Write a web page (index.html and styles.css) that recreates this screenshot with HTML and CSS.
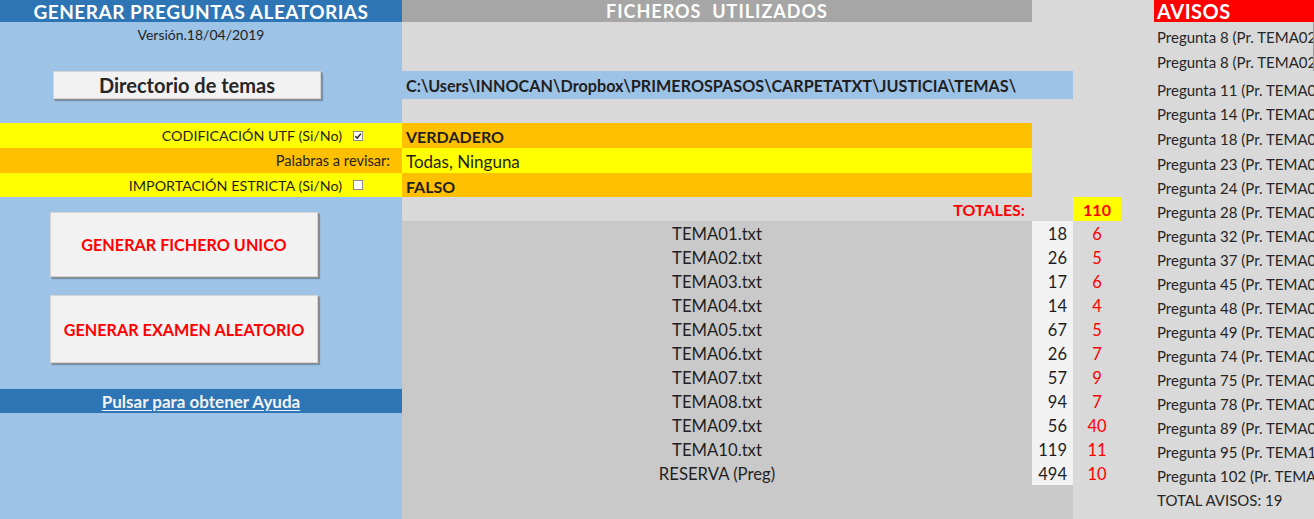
FILE: index.html
```html
<!DOCTYPE html>
<html lang="es">
<head>
<meta charset="utf-8">
<title>Generar preguntas aleatorias</title>
<link rel="stylesheet" href="styles.css">
</head>
<body>
<div class="sheet">
  <div class="title r1">GENERAR PREGUNTAS ALEATORIAS</div>
  <div class="midhead r1">FICHEROS&nbsp; UTILIZADOS</div>
  <div class="avhead r1">AVISOS</div>

  <div class="lefttop">
    <div class="version">Versión.18/04/2019</div>
    <div></div>
    <div class="btnrow"><div class="btn btn-dir">Directorio de temas</div></div>
    <div></div>
  </div>

  <div class="path">C:\Users\INNOCAN\Dropbox\PRIMEROSPASOS\CARPETATXT\JUSTICIA\TEMAS\</div>

  <div class="lbl yellow r6">CODIFICACIÓN UTF (Si/No)<span class="chk"><svg viewBox="0 0 10 10" width="10" height="10"><rect x="0.5" y="0.5" width="9" height="9" fill="#fff" stroke="#8c8c8c"/><path d="M2.3 5.2 L4.2 7.1 L7.8 2.8" fill="none" stroke="#222" stroke-width="1.4"/></svg></span></div>
  <div class="lbl orange plain r7">Palabras a revisar:</div>
  <div class="lbl yellow r8">IMPORTACIÓN ESTRICTA (Si/No)<span class="chk"><svg viewBox="0 0 10 10" width="10" height="10"><rect x="0.5" y="0.5" width="9" height="9" fill="#fff" stroke="#8c8c8c"/></svg></span></div>

  <div class="val orange bold r6">VERDADERO</div>
  <div class="val yellow r7">Todas, Ninguna</div>
  <div class="val orange bold r8">FALSO</div>

  <div class="totlbl r9">TOTALES:</div>
  <div class="totval r9">110</div>

  <div class="leftbottom">
    <div class="btn btn-red btn-1">GENERAR FICHERO UNICO</div>
    <div class="btn btn-red btn-2">GENERAR EXAMEN ALEATORIO</div>
    <div class="help"><span>Pulsar para obtener Ayuda</span></div>
  </div>

  <div class="fname r10">TEMA01.txt</div><div class="fnum r10">18</div><div class="fsel r10">6</div>
  <div class="fname r11">TEMA02.txt</div><div class="fnum r11">26</div><div class="fsel r11">5</div>
  <div class="fname r12">TEMA03.txt</div><div class="fnum r12">17</div><div class="fsel r12">6</div>
  <div class="fname r13">TEMA04.txt</div><div class="fnum r13">14</div><div class="fsel r13">4</div>
  <div class="fname r14">TEMA05.txt</div><div class="fnum r14">67</div><div class="fsel r14">5</div>
  <div class="fname r15">TEMA06.txt</div><div class="fnum r15">26</div><div class="fsel r15">7</div>
  <div class="fname r16">TEMA07.txt</div><div class="fnum r16">57</div><div class="fsel r16">9</div>
  <div class="fname r17">TEMA08.txt</div><div class="fnum r17">94</div><div class="fsel r17">7</div>
  <div class="fname r18">TEMA09.txt</div><div class="fnum r18">56</div><div class="fsel r18">40</div>
  <div class="fname r19">TEMA10.txt</div><div class="fnum r19">119</div><div class="fsel r19">11</div>
  <div class="fname r20">RESERVA (Preg)</div><div class="fnum r20">494</div><div class="fsel r20">10</div>
  <div class="midfill"></div>

  <div class="av edge r2">Pregunta 8 (Pr. TEMA02</div>
  <div class="av edge r3">Pregunta 8 (Pr. TEMA02</div>
  <div class="av r4">Pregunta 11 (Pr. TEMA0</div>
  <div class="av r5">Pregunta 14 (Pr. TEMA0</div>
  <div class="av r6">Pregunta 18 (Pr. TEMA0</div>
  <div class="av r7">Pregunta 23 (Pr. TEMA0</div>
  <div class="av r8">Pregunta 24 (Pr. TEMA0</div>
  <div class="av r9">Pregunta 28 (Pr. TEMA0</div>
  <div class="av r10">Pregunta 32 (Pr. TEMA0</div>
  <div class="av r11">Pregunta 37 (Pr. TEMA0</div>
  <div class="av r12">Pregunta 45 (Pr. TEMA0</div>
  <div class="av r13">Pregunta 48 (Pr. TEMA0</div>
  <div class="av r14">Pregunta 49 (Pr. TEMA0</div>
  <div class="av r15">Pregunta 74 (Pr. TEMA0</div>
  <div class="av r16">Pregunta 75 (Pr. TEMA0</div>
  <div class="av r17">Pregunta 78 (Pr. TEMA0</div>
  <div class="av r18">Pregunta 89 (Pr. TEMA0</div>
  <div class="av r19">Pregunta 95 (Pr. TEMA1</div>
  <div class="av r20">Pregunta 102 (Pr. TEMA</div>
  <div class="av r21">TOTAL AVISOS: 19</div>
</div>
</body>
</html>
```

FILE: styles.css
```css
html, body {
  margin: 0;
  padding: 0;
  background: #d9d9d9;
}

.sheet {
  display: grid;
  grid-template-columns: 402px 630px 41px 48px 33px 160px;
  grid-template-rows: 22px 24px 25px 28px 24px 25px 25px 24px 24px repeat(11, 24px) 24px 10px;
  width: 1314px;
  height: 519px;
  overflow: hidden;
  background: #d9d9d9;
  font-family: "Lato", "Liberation Sans", sans-serif;
  font-size: 16px;
  color: #1f1f1f;
}

.r1 { grid-row: 1; }
.r2 { grid-row: 2; }
.r3 { grid-row: 3; }
.r4 { grid-row: 4; }
.r5 { grid-row: 5; }
.r6 { grid-row: 6; }
.r7 { grid-row: 7; }
.r8 { grid-row: 8; }
.r9 { grid-row: 9; }
.r10 { grid-row: 10; }
.r11 { grid-row: 11; }
.r12 { grid-row: 12; }
.r13 { grid-row: 13; }
.r14 { grid-row: 14; }
.r15 { grid-row: 15; }
.r16 { grid-row: 16; }
.r17 { grid-row: 17; }
.r18 { grid-row: 18; }
.r19 { grid-row: 19; }
.r20 { grid-row: 20; }
.r21 { grid-row: 21; }

/* headers */
.title {
  grid-column: 1;
  background: #2e75b6;
  color: #fff;
  font-weight: 700;
  font-size: 19px;
  letter-spacing: 0.5px;
  display: flex;
  align-items: center;
  justify-content: center;
}
.midhead {
  grid-column: 2;
  background: #a6a6a6;
  color: #fff;
  font-weight: 700;
  font-size: 18px;
  letter-spacing: 1px;
  display: flex;
  align-items: center;
  justify-content: center;
}
.avhead {
  grid-column: 6;
  background: #ff0000;
  color: #fff;
  font-weight: 700;
  font-size: 20px;
  letter-spacing: 0.5px;
  padding-left: 3px;
  display: flex;
  align-items: center;
}

/* left top block */
.lefttop {
  grid-column: 1;
  grid-row: 2 / 6;
  background: #9dc3e6;
  display: grid;
  grid-template-rows: 24px 25px 28px 24px;
}
.version {
  font-size: 14px;
  color: #1f1f1f;
  text-align: center;
  padding-top: 4px;
}
.btnrow {
  display: flex;
  padding-left: 53px;
}

.btn {
  background: #f2f2f2;
  border: 1px solid #d4d4d4;
  box-shadow: 1px 1px 0 #8c8c8c, 2px 2px 1px rgba(0, 0, 0, 0.25);
  display: flex;
  align-items: center;
  justify-content: center;
  font-weight: 700;
  box-sizing: border-box;
}
.btn-dir {
  width: 268px;
  height: 28px;
  font-size: 20px;
  color: #262626;
}

/* path */
.path {
  grid-row: 4;
  grid-column: 2 / 4;
  background: #9dc3e6;
  font-weight: 700;
  font-size: 16.2px;
  padding-left: 4px;
  display: flex;
  align-items: center;
  white-space: nowrap;
}

/* label rows */
.yellow { background: #ffff00; }
.orange { background: #ffc000; }
.bold { font-weight: 700; }

.lbl {
  grid-column: 1;
  display: flex;
  align-items: center;
  justify-content: flex-end;
  font-size: 14.3px;
  padding-right: 39px;
  color: #1f1f1f;
}
.lbl.plain {
  padding-right: 12px;
  font-size: 14.6px;
}
.chk {
  display: inline-flex;
  margin-left: 11px;
}

.val {
  grid-column: 2;
  display: flex;
  align-items: center;
  padding: 2px 0 0 4px;
  font-size: 17px;
}
.val.bold {
  font-size: 16px;
}

.totlbl {
  grid-column: 2;
  display: flex;
  align-items: center;
  justify-content: flex-end;
  padding-right: 7px;
  color: #ff0000;
  font-weight: 700;
  font-size: 16px;
}
.totval {
  grid-column: 4;
  background: #ffff00;
  color: #ff0000;
  font-weight: 700;
  font-size: 16px;
  display: flex;
  align-items: center;
  justify-content: center;
}

/* left bottom block */
.leftbottom {
  grid-column: 1;
  grid-row: 9 / 23;
  background: #9dc3e6;
  display: flex;
  flex-direction: column;
  align-items: flex-start;
  padding-top: 15px;
}
.btn-red {
  color: #ff0000;
  width: 268px;
  margin-left: 50px;
  font-size: 16.2px;
}
.btn-1 { height: 65px; }
.btn-2 { height: 68px; margin-top: 18px; }
.help {
  margin-top: 26px;
  width: 100%;
  height: 24px;
  background: #2e75b6;
  display: flex;
  align-items: center;
  justify-content: center;
}
.help span {
  color: #f2f2f2;
  font-weight: 700;
  font-size: 17px;
  text-decoration: underline;
  text-underline-offset: 2px;
}

/* files table */
.fname,
.fnum,
.fsel {
  display: flex;
  align-items: center;
  padding-top: 2px;
  box-sizing: border-box;
}
.fname {
  grid-column: 2;
  background: #c9c9c9;
  justify-content: center;
  font-size: 16.7px;
}
.fnum {
  grid-column: 3;
  background: #f2f2f2;
  justify-content: flex-end;
  padding-right: 6px;
  font-size: 16.5px;
}
.fsel {
  grid-column: 4;
  justify-content: center;
  color: #ff0000;
  font-size: 16.5px;
}
.midfill {
  grid-column: 2 / 4;
  grid-row: 21 / 23;
  background: #c9c9c9;
}

/* avisos */
.av {
  grid-column: 6;
  display: flex;
  align-items: flex-end;
  padding: 0 0 0 3px;
  white-space: nowrap;
  overflow: hidden;
  font-size: 15px;
  color: #262626;
}
.av.edge {
  border-right: 1px solid #9a9a9a;
}
```
